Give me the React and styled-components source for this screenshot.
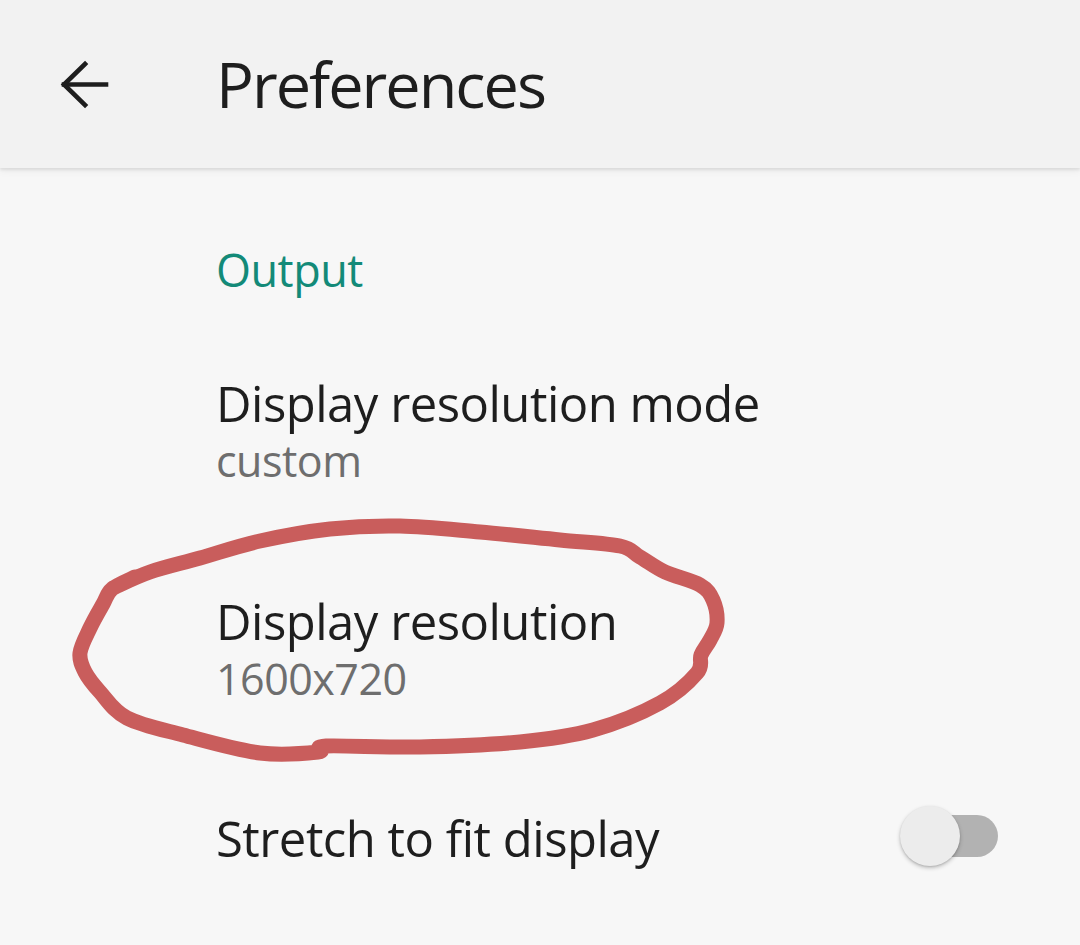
import React from "react";
import styled, { createGlobalStyle } from "styled-components";

const Global = createGlobalStyle`
  html, body { margin: 0; padding: 0; background: #f7f7f7; }
  body { font-family: "Open Sans", "Noto Sans", sans-serif; -webkit-font-smoothing: antialiased; }
`;

const Page = styled.div`
  width: 1080px;
  height: 945px;
  background: #f7f7f7;
  overflow: hidden;
`;

const Header = styled.header`
  height: 168px;
  background: #f2f2f2;
  display: flex;
  align-items: center;
  padding-left: 48px;
  box-shadow: 0 2px 3px rgba(0, 0, 0, 0.09), 0 4px 8px rgba(0, 0, 0, 0.04);
  position: relative;
  z-index: 1;
`;

const BackButton = styled.div`
  width: 72px;
  height: 72px;
  display: flex;
  align-items: center;
  justify-content: center;
  svg { display: block; }
`;

const Title = styled.h1`
  margin: 0 0 0 96px;
  font-size: 63px;
  font-weight: 400;
  color: #1e1e1e;
  line-height: 80px;
  letter-spacing: -2px;
`;

const Content = styled.main`
  padding-top: 72px;
`;

const SectionHeader = styled.div`
  padding-left: 216px;
  font-size: 45px;
  line-height: 60px;
  color: #138a78;
  letter-spacing: -0.5px;
  margin-bottom: 22px;
`;

const Row = styled.div`
  position: relative;
  display: flex;
  align-items: center;
  padding: ${(p) => (p.$single ? "50px" : "51px")} 82px ${(p) => (p.$single ? "50px" : "51px")} 216px;
`;

const TextCol = styled.div`
  flex: 1;
  display: flex;
  flex-direction: column;
`;

const RowTitle = styled.div`
  font-size: 49px;
  line-height: 60px;
  color: #1e1e1e;
  letter-spacing: -0.5px;
`;

const RowSub = styled.div`
  font-size: 43px;
  line-height: 56px;
  color: #6e6e6e;
  letter-spacing: -0.5px;
`;

const SwitchBox = styled.div`
  position: relative;
  width: 98px;
  height: 62px;
  margin-top: -4px;
`;

const Track = styled.div`
  position: absolute;
  right: 0;
  top: 10px;
  width: 86px;
  height: 42px;
  border-radius: 21px;
  background: #b2b2b2;
`;

const Thumb = styled.div`
  position: absolute;
  left: 0;
  top: 1px;
  width: 60px;
  height: 60px;
  border-radius: 50%;
  background: #ececec;
  box-shadow: 0 2px 4px rgba(0, 0, 0, 0.22), 0 1px 2px rgba(0, 0, 0, 0.12);
`;

const Annotation = styled.svg`
  position: absolute;
  left: 60px;
  top: -30px;
  width: 680px;
  height: 260px;
  pointer-events: none;
  overflow: visible;
`;

// hand-drawn loop, global coords shifted by (60,510)
const pts = [
  [113, 588], [150, 572], [200, 558], [260, 541], [330, 529], [400, 526],
  [480, 532], [560, 540], [620, 546], [640, 557], [665, 572], [700, 585],
  [713, 600], [717, 623], [710, 640], [701, 655], [697, 673], [660, 703],
  [593, 730], [520, 742], [420, 747], [326, 746], [318, 752], [260, 753],
  [183, 735], [127, 718], [100, 692], [85, 672], [80, 653], [90, 628],
  [103, 604], [112, 589], [135, 577],
].map(([x, y]) => [x - 60, y - 510]);

function smoothPath(points) {
  let d = `M${points[0][0]},${points[0][1]}`;
  for (let i = 0; i < points.length - 1; i++) {
    const p0 = points[i - 1] || points[i];
    const p1 = points[i];
    const p2 = points[i + 1];
    const p3 = points[i + 2] || p2;
    const c1x = p1[0] + (p2[0] - p0[0]) / 6;
    const c1y = p1[1] + (p2[1] - p0[1]) / 6;
    const c2x = p2[0] - (p3[0] - p1[0]) / 6;
    const c2y = p2[1] - (p3[1] - p1[1]) / 6;
    d += ` C${c1x.toFixed(1)},${c1y.toFixed(1)} ${c2x.toFixed(1)},${c2y.toFixed(1)} ${p2[0]},${p2[1]}`;
  }
  return d;
}

// box placed at x 48..120, y 48..120 (global); arrow tip (62,83), shaft to 108, heads at (85,63)/(85,105)
const BackArrow = () => (
  <svg width="72" height="72" viewBox="0 0 72 72">
    <g stroke="#1e1e1e" strokeWidth="4.6" fill="none" strokeLinecap="square">
      <path d="M16 36.5 H58" />
      <path d="M37 16 L16 36.5 L37 57" strokeLinejoin="miter" />
    </g>
  </svg>
);

export default function App() {
  return (
    <Page>
      <Global />
      <Header>
        <BackButton>
          <BackArrow />
        </BackButton>
        <Title>Preferences</Title>
      </Header>
      <Content>
        <SectionHeader>Output</SectionHeader>
        <Row>
          <TextCol>
            <RowTitle>Display resolution mode</RowTitle>
            <RowSub>custom</RowSub>
          </TextCol>
        </Row>
        <Row>
          <Annotation viewBox="0 0 680 260">
            <path
              d={smoothPath(pts)}
              fill="none"
              stroke="#c95d5c"
              strokeWidth="15"
              strokeLinecap="round"
              strokeLinejoin="round"
            />
          </Annotation>
          <TextCol>
            <RowTitle>Display resolution</RowTitle>
            <RowSub>1600x720</RowSub>
          </TextCol>
        </Row>
        <Row $single>
          <TextCol>
            <RowTitle>Stretch to fit display</RowTitle>
          </TextCol>
          <SwitchBox>
            <Track />
            <Thumb />
          </SwitchBox>
        </Row>
      </Content>
    </Page>
  );
}
